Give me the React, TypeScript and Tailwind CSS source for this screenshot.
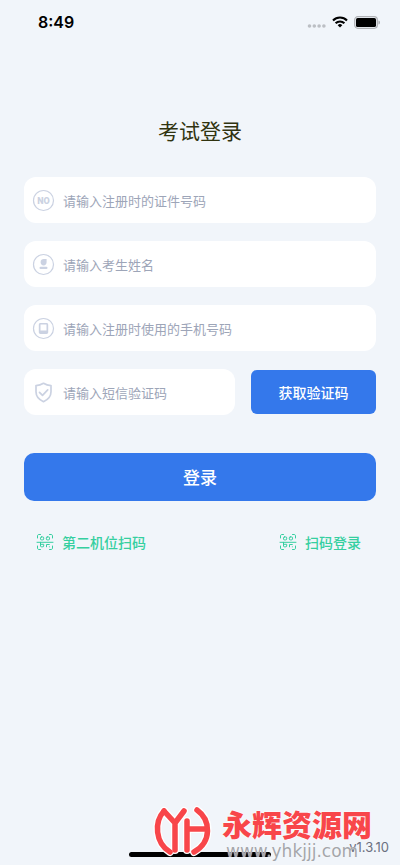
import type { ReactNode } from "react";

interface FieldProps {
  id: string;
  label: string;
  type?: string;
  icon: ReactNode;
}

function Field({ id, label, type = "text", icon }: FieldProps) {
  return (
    <div className="flex h-[46px] min-w-0 flex-1 items-center gap-2 rounded-xl bg-white px-2">
      <label htmlFor={id} aria-label={label} className="shrink-0 text-[#cbd2e2]">
        {icon}
      </label>
      <input
        id={id}
        type={type}
        placeholder={label}
        className="h-full w-full min-w-0 bg-transparent text-[13px] text-[#333a4a] outline-none placeholder:text-[#9da5b8]"
      />
    </div>
  );
}

function NumberIcon() {
  return (
    <svg width="23" height="23" viewBox="0 0 23 23" fill="none">
      <circle cx="11.5" cy="11.5" r="10" stroke="currentColor" strokeWidth="1.2" />
      <text x="11.5" y="15" textAnchor="middle" fill="currentColor" className="font-[Roboto,sans-serif] text-[9px] font-black">
        NO
      </text>
    </svg>
  );
}

function PersonIcon() {
  return (
    <svg width="23" height="23" viewBox="0 0 23 23" fill="none">
      <circle cx="11.5" cy="11.5" r="10" stroke="currentColor" strokeWidth="1.2" />
      <path d="M8.600 9.300c0-2 1.300-3.200 3.200-3.200h2.800v3.200c0 1.900-1.200 3.100-3 3.100s-3-1.200-3-3.100Z" fill="currentColor" />
      <rect x="7.500" y="13.800" width="8" height="2.300" rx="1.100" fill="currentColor" />
    </svg>
  );
}

function PhoneIcon() {
  return (
    <svg width="23" height="23" viewBox="0 0 23 23" fill="none">
      <circle cx="11.5" cy="11.5" r="10" stroke="currentColor" strokeWidth="1.2" />
      <path
        fillRule="evenodd"
        fill="currentColor"
        d="M8.500 6h6c1 0 1.700.7 1.700 1.700v7.600c0 1-.7 1.700-1.700 1.700h-6c-1 0-1.700-.7-1.700-1.700V7.700c0-1 .7-1.700 1.700-1.700Zm0 1.400v6.100h6V7.400h-6Z"
      />
    </svg>
  );
}

function ShieldIcon() {
  return (
    <svg width="23" height="23" viewBox="0 0 23 23" fill="none" stroke="currentColor" strokeLinejoin="round" strokeLinecap="round">
      <path d="M11.500 2.300c2.300 1.500 4.600 2.200 7.500 2.300v6.200c0 4.700-3 7.900-7.500 9.900C7 18.700 4 15.500 4 10.800V4.600c2.900-.1 5.200-.8 7.500-2.300Z" strokeWidth="1.700" />
      <path d="m7.500 11.300 3 3 5.200-5.500" strokeWidth="1.700" />
    </svg>
  );
}

function ScanIcon() {
  return (
    <svg width="18" height="18" viewBox="0 0 18 18" fill="none" stroke="currentColor" strokeLinecap="round">
      <path d="M1.500 5V3c0-1 .6-1.500 1.500-1.500h1.500M13.500 1.500H15c1 0 1.500.6 1.500 1.500v2M16.500 13v2c0 1-.6 1.500-1.500 1.500h-1.500M4.500 16.500H3c-1 0-1.500-.6-1.500-1.500v-2" />
      <path d="M1 9.300h16" />
      <rect x="4.500" y="3.900" width="3.200" height="3" rx="1" />
      <rect x="10.300" y="3.900" width="3.200" height="3" rx="1" />
      <path d="M4.500 9.300v3.700c0 .5.300.8.800.8h1.600c.5 0 .8-.3.800-.8v-1.700H4.500" />
      <path d="M10.500 13.800v-2.300h2.800M13.300 13.800h.1" />
    </svg>
  );
}

function StatusBar() {
  return (
    <header className="flex h-11 items-center justify-between pl-[38px] pr-5">
      <span className="font-[Inter,sans-serif] text-[16px] font-semibold text-black">8:49</span>
      <div className="flex items-center gap-[6px]">
        <svg width="19" height="14" viewBox="0 0 19 14" fill="#bcbfc4">
          <circle cx="2.500" cy="11" r="1.800" />
          <circle cx="7.300" cy="11" r="1.800" />
          <circle cx="12.100" cy="11" r="1.800" />
          <circle cx="16.900" cy="11" r="1.800" />
        </svg>
        <svg width="16" height="12" viewBox="0 0 16 12" fill="none" stroke="#000" strokeWidth="2.100">
          <path d="M1 4.400a10 10 0 0 1 14 0" />
          <path d="M3.600 7.300a6.200 6.200 0 0 1 8.800 0" />
          <path d="m8 11.600-2.300-2.400a3.300 3.300 0 0 1 4.600 0Z" fill="#000" stroke="none" />
        </svg>
        <svg width="26" height="13" viewBox="0 0 26 13" fill="none">
          <rect x=".7" y=".7" width="22.600" height="11.600" rx="3.200" stroke="#b0b2b6" strokeWidth="1.300" />
          <rect x="2" y="2" width="20" height="9" rx="1.600" fill="#000" />
          <path d="M24.500 4.500c1 .4 1.400 1.100 1.400 2s-.4 1.600-1.400 2v-4Z" fill="#a3a5a9" />
        </svg>
      </div>
    </header>
  );
}

function Watermark() {
  return (
    <div className="absolute bottom-[6px] right-[28px] flex items-end gap-[11px]">
      <svg width="56" height="53" viewBox="0 0 56 53" className="overflow-visible" fill="none" strokeLinecap="round" strokeLinejoin="round">
        <g stroke="#fff" strokeWidth="8">
          <path d="M9 5C-1 16 0 37 15 46" />
          <path d="m9 5 11 12L29 5M20 17v27" />
          <path d="M32 15v29M32 23h20" />
          <path d="M42 4c14 10 15 32-3 42" />
        </g>
        <g stroke="#f8464a" strokeWidth="5.500">
          <path d="M9 5C-1 16 0 37 15 46" />
          <path d="m9 5 11 12L29 5M20 17v27" />
          <path d="M32 15v29M32 23h20" />
          <path d="M42 4c14 10 15 32-3 42" />
        </g>
      </svg>
      <div className="whitespace-nowrap">
        <p className="text-[30px] font-black leading-[32px] text-[#f8464a] [text-shadow:0_0_2px_#fff,0_0_2px_#fff]">永辉资源网</p>
        <p className="pl-1 pt-1 font-['DejaVu_Sans',sans-serif] text-[17px] leading-[16px] text-[#a4a6aa] [text-shadow:0_0_1px_#fff]">www.yhkjjj.com</p>
      </div>
    </div>
  );
}

export default function App() {
  return (
    <div className="relative flex min-h-screen flex-col bg-[#f1f5fa] font-['Noto_Sans_CJK_SC',sans-serif]">
      <StatusBar />

      <main className="px-6 pt-[70px]">
        <h1 className="text-center text-[21px] leading-[32px] text-[#30330f]">考试登录</h1>

        <form className="mt-[31px] flex flex-col" onSubmit={(e) => e.preventDefault()}>
          <div className="flex flex-col gap-[18px]">
            <div className="flex">
              <Field id="idNumber" label="请输入注册时的证件号码" icon={<NumberIcon />} />
            </div>
            <div className="flex">
              <Field id="name" label="请输入考生姓名" icon={<PersonIcon />} />
            </div>
            <div className="flex">
              <Field id="phone" type="tel" label="请输入注册时使用的手机号码" icon={<PhoneIcon />} />
            </div>
            <div className="flex items-center gap-4">
              <Field id="code" label="请输入短信验证码" icon={<ShieldIcon />} />
              <button type="button" className="h-11 w-[125px] shrink-0 rounded-md bg-[#3478eb] text-[14px] font-medium text-white">
                获取验证码
              </button>
            </div>
          </div>
          <button type="submit" className="mt-[38px] h-12 rounded-[10px] bg-[#3478eb] text-[17px] font-medium text-white">
            登录
          </button>
        </form>

        <nav className="mt-[31px] flex justify-between pl-3 pr-[15px] text-[14px] font-medium leading-[20px] text-[#35cfa0]">
          <a href="#second" className="flex items-center gap-2">
            <ScanIcon />
            第二机位扫码
          </a>
          <a href="#scan" className="flex items-center gap-2">
            <ScanIcon />
            扫码登录
          </a>
        </nav>
      </main>

      <footer className="mt-auto flex flex-col">
        <p className="self-end pr-[11px] font-[Inter,sans-serif] text-[13px] leading-[16px] text-[#6b7080]">v1.3.10</p>
        <div className="mb-2 -mt-[3px] h-[5px] w-[142px] self-center rounded-full bg-black" />
      </footer>

      <Watermark />
    </div>
  );
}
